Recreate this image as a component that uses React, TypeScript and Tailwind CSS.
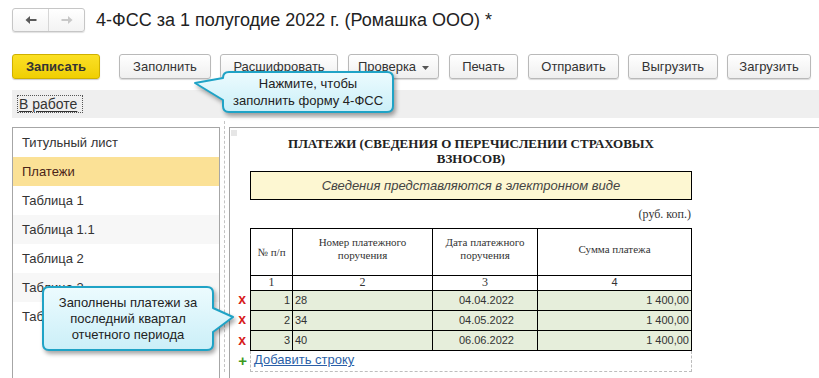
import React from 'react';

type ToolButton = { label: string; cls: string; dropdown?: boolean };

const toolButtons: ToolButton[] = [
  { label: 'Заполнить', cls: 'w-[92px] ml-[19px]' },
  { label: 'Расшифровать', cls: 'w-[118px] ml-[9px]' },
  { label: 'Проверка', cls: 'w-[91px] ml-[10px]', dropdown: true },
  { label: 'Печать', cls: 'w-[69px] ml-[10px]' },
  { label: 'Отправить', cls: 'w-[91px] ml-[10px]' },
  { label: 'Выгрузить', cls: 'w-[90px] ml-[9px]' },
  { label: 'Загрузить', cls: 'w-[84px] ml-[9px]' },
];

const sections = [
  { name: 'Титульный лист', cls: 'bg-white' },
  { name: 'Платежи', cls: 'bg-[#fbe196] text-[#4a2418]' },
  { name: 'Таблица 1', cls: 'bg-white' },
  { name: 'Таблица 1.1', cls: 'bg-[#f7f7f7]' },
  { name: 'Таблица 2', cls: 'bg-white' },
  { name: 'Таблица 3', cls: 'bg-[#f7f7f7]' },
  { name: 'Таблица 4', cls: 'bg-white' },
];

const payments = [
  { n: '1', num: '28', date: '04.04.2022', sum: '1 400,00' },
  { n: '2', num: '34', date: '04.05.2022', sum: '1 400,00' },
  { n: '3', num: '40', date: '06.06.2022', sum: '1 400,00' },
];

const Arrow: React.FC<{ dir: 'left' | 'right'; color: string }> = ({ dir, color }) => (
  <svg width="12" height="10" viewBox="0 0 12 10" className={dir === 'right' ? 'rotate-180' : ''}>
    <path d="M0.5 5 L5 1 V4 H11.5 V6 H5 V9 Z" fill={color} />
  </svg>
);

const Callout: React.FC<{ d: string; w: number; h: number; id: string }> = ({ d, w, h, id }) => (
  <svg width={w} height={h} className="absolute left-0 top-0 drop-shadow-[2px_3px_2px_rgba(0,0,0,0.35)]">
    <defs>
      <linearGradient id={id} x1="0" y1="0" x2="0" y2="1">
        <stop offset="0" stopColor="#ecfbfe" />
        <stop offset="1" stopColor="#cbeff8" />
      </linearGradient>
    </defs>
    <path d={d} fill={`url(#${id})`} stroke="#1fa3c6" strokeWidth="2" strokeLinejoin="round" />
  </svg>
);

const App: React.FC = () => {
  return (
    <div className="w-[819px] h-[378px] relative overflow-hidden bg-white text-[#333] font-['Liberation_Sans',Arial,sans-serif]">
      {/* header */}
      <div className="flex items-center pl-[12px] pt-[8px] h-[32px]">
        <div className="flex w-[73px] h-[24px] border border-[#c6c6c6] rounded-[3px] bg-gradient-to-b from-white to-[#f3f3f3] shadow-[0_1px_1px_rgba(0,0,0,0.12)]">
          <div className="w-[36px] flex items-center justify-center border-r border-[#d6d6d6]">
            <Arrow dir="left" color="#5a5a5a" />
          </div>
          <div className="flex-1 flex items-center justify-center">
            <Arrow dir="right" color="#c8c8c8" />
          </div>
        </div>
        <div className="ml-[11px] text-[18px] text-[#222] leading-none">4-ФСС за 1 полугодие 2022 г. (Ромашка ООО) *</div>
      </div>

      {/* toolbar */}
      <div className="flex pl-[12px] mt-[22px] h-[25px]">
        <div className="w-[88px] flex items-center justify-center rounded-[3px] border border-[#cfb000] bg-gradient-to-b from-[#fbe023] to-[#f0cf00] text-[13px] font-bold text-[#333] shadow-[0_1px_1px_rgba(0,0,0,0.2)]">
          Записать
        </div>
        {toolButtons.map((b) => (
          <div
            key={b.label}
            className={`${b.cls} flex items-center justify-center rounded-[3px] border border-[#b9b9b9] bg-gradient-to-b from-white to-[#efefef] text-[13px] text-[#333] shadow-[0_1px_1px_rgba(0,0,0,0.15)]`}
          >
            {b.label}
            {b.dropdown && (
              <svg width="7" height="4" viewBox="0 0 7 4" className="ml-[6px] mt-[2px]">
                <path d="M0 0 H7 L3.5 4 Z" fill="#555" />
              </svg>
            )}
          </div>
        ))}
      </div>

      {/* status bar */}
      <div className="ml-[12px] mt-[11px] h-[28px] bg-[#efefef] flex items-center pl-[5px]">
        <span className="pl-[1px] pr-[5px] border border-dotted border-[#555] text-[14px] leading-[16px] text-[#333] underline underline-offset-2">
          В работе
        </span>
      </div>

      {/* body */}
      <div className="flex mt-[9px] h-[251px]">
        <div className="ml-[12px] w-[208px] border border-b-0 border-[#a6a6a6]">
          {sections.map((s) => (
            <div key={s.name} className={`${s.cls} h-[29px] flex items-center pl-[9px] text-[13px]`}>
              {s.name}
            </div>
          ))}
        </div>
        <div className="w-[9px] flex justify-center">
          <div className="h-full border-l border-dashed border-[#c4c4c4] -mt-[6px]" />
        </div>
        <div className="flex-1 relative border-t border-l border-[#a3a3a3]">
          <div className="absolute left-[1px] top-[2px] w-[6px] h-[6px] bg-[#e6e6e6]" />
          <div className="ml-[20px] w-[442px] pt-[8px]">
            <div className="text-center font-['Liberation_Serif',serif] font-bold text-[13px] leading-[15px] text-[#222]">
              ПЛАТЕЖИ (СВЕДЕНИЯ О ПЕРЕЧИСЛЕНИИ СТРАХОВЫХ
              <br />
              ВЗНОСОВ)
            </div>
            <div className="mt-[5px] h-[29px] border border-black bg-[#fdf7d2] flex items-center justify-center italic text-[13px] text-[#444]">
              Сведения представляются в электронном виде
            </div>
            <div className="mt-[7px] h-[14px] text-right pr-[1px] font-['Liberation_Serif',serif] text-[12px] leading-[14px] text-[#333]">
              (руб. коп.)
            </div>
          </div>

          <div className="mt-[7px]">
            <div className="flex">
              <div className="w-[20px]" />
              <div className="w-[442px] h-[47px] grid grid-cols-[41px_140px_105px_154px] border-x border-t border-black font-['Liberation_Serif',serif] text-[11px] leading-[13px] text-[#333] text-center">
                <div className="flex items-center justify-center">№ п/п</div>
                <div className="border-l border-black flex items-center justify-center px-[20px] pb-[6px]">Номер платежного поручения</div>
                <div className="border-l border-black flex items-center justify-center px-[10px] pb-[6px]">Дата платежного поручения</div>
                <div className="border-l border-black flex items-center justify-center pb-[6px]">Сумма платежа</div>
              </div>
            </div>
            <div className="flex">
              <div className="w-[20px]" />
              <div className="w-[442px] h-[15px] grid grid-cols-[41px_140px_105px_154px] border-x border-t border-black font-['Liberation_Serif',serif] text-[12px] leading-[13px] text-[#333] text-center">
                <div>1</div>
                <div className="border-l border-black">2</div>
                <div className="border-l border-black">3</div>
                <div className="border-l border-black font-['Liberation_Sans',Arial,sans-serif] text-[11px]">4</div>
              </div>
            </div>
            {payments.map((p, i) => (
              <div key={p.n} className="flex">
                <div className="w-[20px] flex items-center justify-end pr-[4px] text-[14px] font-bold text-[#d71a1a] leading-none pb-[2px]">x</div>
                <div
                  className={`w-[442px] ${i === payments.length - 1 ? 'h-[21px] border-b' : 'h-[20px]'} grid grid-cols-[41px_140px_105px_154px] border-x border-t border-black bg-[#e6eedb] text-[11px] text-[#333] leading-[19px]`}
                >
                  <div className="text-right pr-[2px]">{p.n}</div>
                  <div className="border-l border-black pl-[2px]">{p.num}</div>
                  <div className="border-l border-black text-right pr-[23px]">{p.date}</div>
                  <div className="border-l border-black text-right pr-[2px]">{p.sum}</div>
                </div>
              </div>
            ))}
            <div className="flex">
              <div className="w-[20px] flex items-center justify-end pr-[3px] pb-[2px] text-[15px] font-bold text-[#3c9a1c] leading-none">+</div>
              <div className="w-[442px] h-[21px] border-x border-b border-dashed border-[#bdbdbd] flex items-center pl-[3px] pb-[3px]">
                <span className="text-[13px] text-[#2b5fa8] underline leading-none">Добавить строку</span>
              </div>
            </div>
          </div>
        </div>
      </div>

      {/* callout: fill */}
      <div className="absolute left-[190px] top-[68px] w-[210px] h-[52px]">
        <Callout
          id="g1"
          w={210}
          h={52}
          d="M39 4 H197 Q203 4 203 10 V38 Q203 44 197 44 H39 Q33 44 33 38 V32 L5 15 L33 10 Q33 4 39 4 Z"
        />
        <div className="absolute left-[33px] top-[4px] w-[170px] h-[40px] flex flex-col items-center justify-center text-[13px] leading-[17px] text-[#222]">
          <span>Нажмите, чтобы</span>
          <span>заполнить форму 4-ФСС</span>
        </div>
      </div>

      {/* callout: payments */}
      <div className="absolute left-[38px] top-[282px] w-[205px] h-[76px]">
        <Callout
          id="g2"
          w={205}
          h={76}
          d="M11 5 H169 Q175 5 175 11 V26 L195 35 L175 50 V62 Q175 68 169 68 H11 Q5 68 5 62 V11 Q5 5 11 5 Z"
        />
        <div className="absolute left-[5px] top-[5px] w-[170px] h-[63px] flex flex-col items-center justify-center text-[13px] leading-[16px] text-[#222]">
          <span>Заполнены платежи за</span>
          <span>последний квартал</span>
          <span>отчетного периода</span>
        </div>
      </div>
    </div>
  );
};

export default App;
